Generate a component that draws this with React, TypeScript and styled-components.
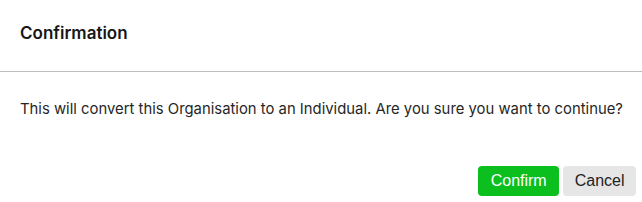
import styled, { createGlobalStyle } from "styled-components";

const GlobalStyle = createGlobalStyle`
  body {
    margin: 0;
    background: #ffffff;
    font-family: Inter, "Noto Sans", sans-serif;
  }
`;

export default function App() {
  return (
    <>
      <GlobalStyle />
      <Dialog>
        <Header>
          <Title>Confirmation</Title>
        </Header>
        <Body>
          This will convert this Organisation to an Individual. Are you sure you
          want to continue?
        </Body>
        <Footer>
          <Button $variant="primary">Confirm</Button>
          <Button $variant="secondary">Cancel</Button>
        </Footer>
      </Dialog>
    </>
  );
}

const Dialog = styled.div`
  width: 642px;
  height: 202px;
  display: flex;
  flex-direction: column;
  background: #ffffff;
  overflow: hidden;
`;

const Header = styled.div`
  height: 72px;
  padding: 0 20px 6px;
  box-sizing: border-box;
  display: flex;
  align-items: center;
  border-bottom: 1px solid #bdbdbd;
`;

const Title = styled.h1`
  margin: 0;
  font-size: 17px;
  font-weight: 600;
  color: #161616;
`;

const Body = styled.p`
  margin: 0;
  padding: 28px 20px 0;
  font-size: 14.85px;
  color: #262626;
  white-space: nowrap;
`;

const Footer = styled.div`
  margin-top: auto;
  display: flex;
  justify-content: flex-end;
  gap: 4px;
  padding: 0 6px 6px;
`;

const Button = styled.button<{ $variant: "primary" | "secondary" }>`
  height: 30px;
  padding: 0 ${(p) => (p.$variant === "primary" ? "12.5px" : "11.5px")};
  border: none;
  border-radius: 4px;
  font-family: "Liberation Sans", Arial, sans-serif;
  font-size: 16px;
  cursor: pointer;
  background: ${(p) => (p.$variant === "primary" ? "#0bbf1f" : "#e6e6e6")};
  color: ${(p) => (p.$variant === "primary" ? "#ffffff" : "#222222")};
`;
